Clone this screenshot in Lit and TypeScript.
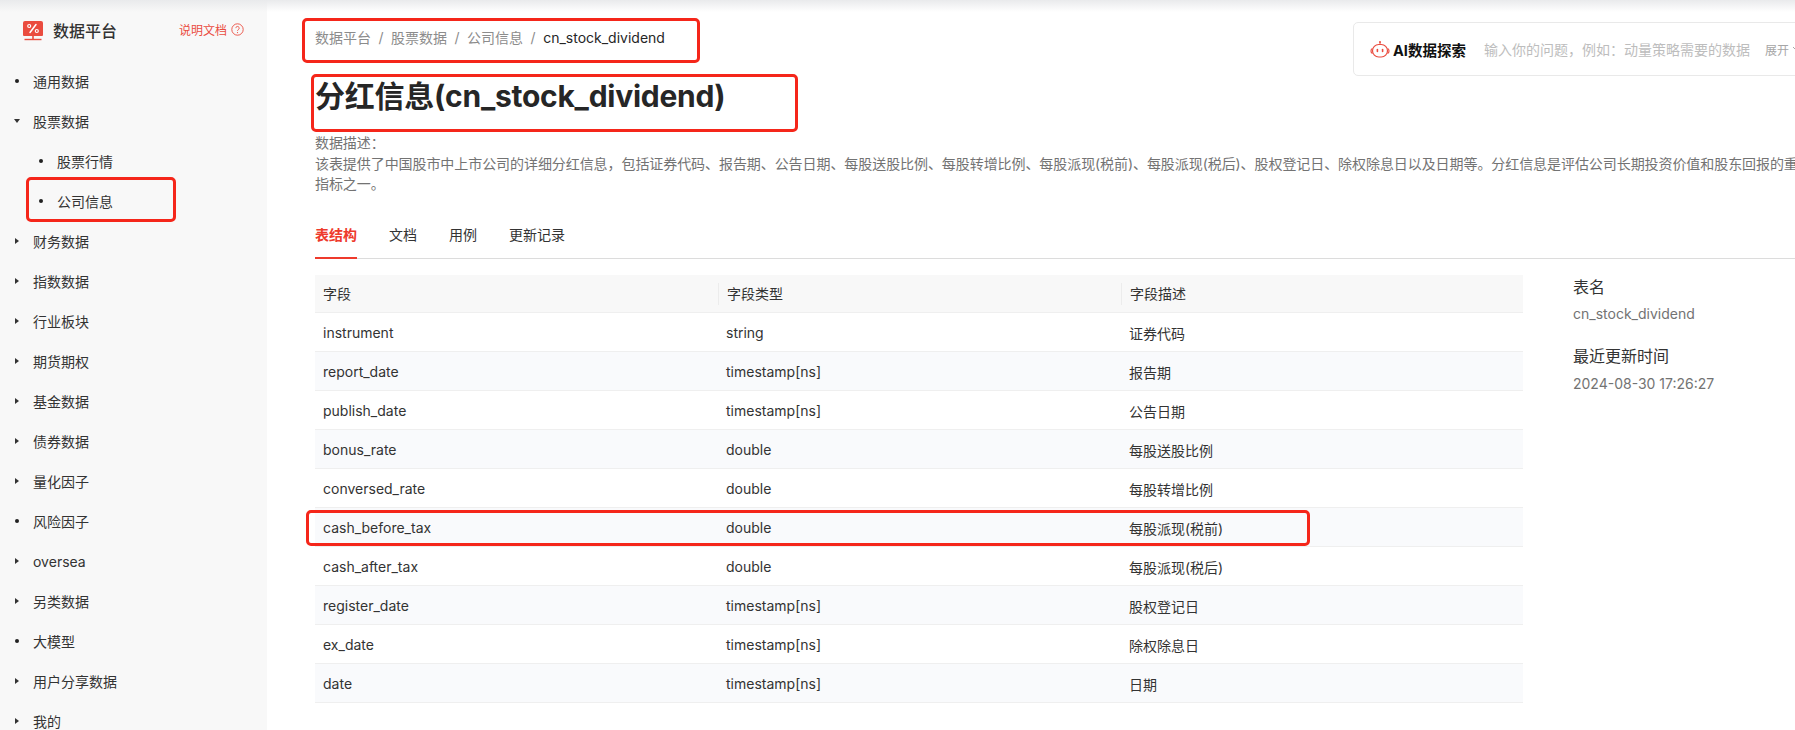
import { LitElement, html, css } from "lit";
import { customElement } from "lit/decorators.js";

type Nav = { label: string; mark: "dot" | "right" | "down"; sub?: boolean; };

const NAV: Nav[] = [
  { label: "通用数据", mark: "dot" },
  { label: "股票数据", mark: "down" },
  { label: "股票行情", mark: "dot", sub: true },
  { label: "公司信息", mark: "dot", sub: true },
  { label: "财务数据", mark: "right" },
  { label: "指数数据", mark: "right" },
  { label: "行业板块", mark: "right" },
  { label: "期货期权", mark: "right" },
  { label: "基金数据", mark: "right" },
  { label: "债券数据", mark: "right" },
  { label: "量化因子", mark: "right" },
  { label: "风险因子", mark: "dot" },
  { label: "oversea", mark: "right" },
  { label: "另类数据", mark: "right" },
  { label: "大模型", mark: "dot" },
  { label: "用户分享数据", mark: "right" },
  { label: "我的", mark: "right" },
];

const ROWS = [
  ["instrument", "string", "证券代码"],
  ["report_date", "timestamp[ns]", "报告期"],
  ["publish_date", "timestamp[ns]", "公告日期"],
  ["bonus_rate", "double", "每股送股比例"],
  ["conversed_rate", "double", "每股转增比例"],
  ["cash_before_tax", "double", "每股派现(税前)"],
  ["cash_after_tax", "double", "每股派现(税后)"],
  ["register_date", "timestamp[ns]", "股权登记日"],
  ["ex_date", "timestamp[ns]", "除权除息日"],
  ["date", "timestamp[ns]", "日期"],
];

const DESC_LABEL = "数据描述\uFF1A";
const DESC =
  "该表提供了中国股市中上市公司的详细分红信息\uFF0C包括证券代码、报告期、公告日期、每股送股比例、每股转增比例、每股派现(税前)、每股派现(税后)、股权登记日、除权除息日以及日期等。分红信息是评估公司长期投资价值和股东回报的重要指标之一。";
const PLACEHOLDER = "输入你的问题\uFF0C例如\uFF1A动量策略需要的数据";

@customElement("app-root")
export class AppRoot extends LitElement {
  static styles = css`
    :host {
      display: flex;
      position: relative;
      width: 1795px;
      height: 730px;
      overflow: hidden;
      background: #fff;
      color: #262626;
      font-family: Inter, "Noto Sans CJK SC", sans-serif;
      font-size: 14px;
    }
    .topshade {
      position: absolute;
      inset: 0 0 auto 0;
      height: 12px;
      background: linear-gradient(#e9eaec, rgba(240, 241, 243, 0));
      pointer-events: none;
    }
    .side {
      flex: 0 0 267px;
      background: #f8f8f8;
      overflow: hidden;
    }
    .brand {
      display: flex;
      align-items: center;
      height: 61px;
      padding-left: 23px;
    }
    .brand svg { flex: none; }
    .brand-name {
      margin-left: 10px;
      margin-bottom: 2px;
      font-size: 16px;
      font-weight: 500;
      color: #333;
    }
    .doc {
      display: flex;
      align-items: center;
      gap: 4px;
      margin-left: 62px;
      margin-bottom: 2px;
      font-size: 12px;
      color: #ea4c3f;
    }
    .item {
      display: flex;
      align-items: center;
      height: 40px;
      padding-left: 14px;
      color: #333;
    }
    .item.sub { padding-left: 38px; }
    .mark {
      flex: none;
      display: flex;
      align-items: center;
      justify-content: center;
      width: 6px;
      margin-right: 13px;
    }
    .dot { width: 4px; height: 4px; border-radius: 50%; background: #222; }
    .right {
      width: 0; height: 0;
      border-left: 4px solid #333;
      border-top: 3.5px solid transparent;
      border-bottom: 3.5px solid transparent;
    }
    .down {
      width: 0; height: 0;
      border-top: 4px solid #333;
      border-left: 3.5px solid transparent;
      border-right: 3.5px solid transparent;
    }
    .main {
      flex: none;
      width: 1558px;
      box-sizing: border-box;
      padding: 0 0 0 48px;
    }
    .head {
      display: flex;
      justify-content: space-between;
      align-items: flex-start;
      height: 79px;
    }
    .crumbs {
      display: flex;
      align-items: center;
      gap: 7.5px;
      padding-top: 28px;
      line-height: 20px;
      color: #8c8c8c;
    }
    .crumbs .cur { color: #262626; }
    .ai {
      flex: none;
      display: flex;
      align-items: center;
      box-sizing: border-box;
      width: 480px;
      height: 54px;
      margin-top: 22px;
      margin-right: -8px;
      padding-left: 16px;
      border: 1px solid #e9e9e9;
      border-radius: 5px;
      background: #fff;
    }
    .ai-title { margin-left: 3px; font-size: 14.5px; font-weight: 700; color: #111; white-space: nowrap; }
    .ai-ph { margin-left: 18px; color: #bdbdbd; white-space: nowrap; }
    .ai-more {
      display: flex;
      align-items: center;
      gap: 3px;
      margin-left: 15px;
      font-size: 12px;
      color: #a6a6a6;
      white-space: nowrap;
    }
    h1 {
      margin: 0;
      font-size: 30px;
      line-height: 34px;
      font-weight: 700;
      letter-spacing: -0.25px;
      color: #262626;
    }
    .desc {
      margin-top: 20px;
      line-height: 20.5px;
      letter-spacing: -0.07px;
      color: #737373;
    }
    .tabs {
      display: flex;
      gap: 32px;
      height: 49px;
      margin-top: 15.5px;
      box-sizing: border-box;
      border-bottom: 1px solid #dcdcdc;
    }
    .tab {
      box-sizing: border-box;
      height: 49px;
      line-height: 50px;
      color: #333;
    }
    .tab.on {
      color: #ee3a2c;
      font-weight: 700;
      border-bottom: 2px solid #ee3a2c;
    }
    .body { display: flex; margin-top: 16px; }
    .table { flex: 0 0 1208px; }
    .row {
      display: grid;
      grid-template-columns: 403px 403px 402px;
      height: 39px;
      box-sizing: border-box;
      border-bottom: 1px solid #efefef;
      align-items: center;
      color: #333;
    }
    .row:nth-child(odd):not(.hd) { background: #f9fafc; }
    .row > div { padding: 1px 0 0 8px; }
    .row.hd { height: 38px; background: #f8f8f8; }
    .row.hd > div { padding-top: 0; line-height: 22px; }
    .row.hd > div + div { border-left: 1px solid #ececec; }
    .info { margin: -1px 0 0 50px; }
    .info h4 {
      margin: 0;
      font-size: 16px;
      font-weight: 400;
      line-height: 26px;
      color: #333;
    }
    .info p {
      margin: 0 0 18px;
      padding-top: 2.5px;
      line-height: 22px;
      color: #737373;
      white-space: nowrap;
    }
    .info p:last-child { padding-top: 4px; }
    .note {
      position: absolute;
      box-sizing: border-box;
      border: 3px solid #f5261a;
      border-radius: 5px;
      pointer-events: none;
    }
    .n1 { left: 302px; top: 18px; width: 398px; height: 45px; }
    .n2 { left: 311px; top: 74px; width: 487px; height: 58px; }
    .n3 { left: 26px; top: 177px; width: 150px; height: 45px; }
    .n4 { left: 306px; top: 510px; width: 1004px; height: 36px; }
  `;

  private renderMark(m: Nav["mark"]) {
    return html`<span class="mark"><span class=${m}></span></span>`;
  }

  render() {
    return html`
      <aside class="side">
        <div class="brand">
          <svg width="20" height="21" viewBox="0 0 20 21">
            <path fill="#ea4c3f" d="M2 1h16a2 2 0 0 1 2 2v12a1 1 0 0 1-1 1H1a1 1 0 0 1-1-1V3a2 2 0 0 1 2-2z"/>
            <path stroke="#fff" stroke-width="1.5" fill="none" stroke-linecap="round" d="M13 4.5 7 12.5"/>
            <circle cx="6.2" cy="6" r="1.5" fill="none" stroke="#fff" stroke-width="1.2"/>
            <circle cx="13.8" cy="11" r="1.5" fill="none" stroke="#fff" stroke-width="1.2"/>
            <rect x="9.2" y="16" width="1.6" height="3" fill="#ea4c3f"/>
            <rect x="1.5" y="18.8" width="17" height="1.4" fill="#ea4c3f"/>
          </svg>
          <span class="brand-name">数据平台</span>
          <span class="doc">说明文档
            <svg width="13" height="13" viewBox="0 0 13 13">
              <circle cx="6.5" cy="6.5" r="5.7" fill="none" stroke="#ea4c3f" stroke-width="0.9"/>
              <path d="M4.8 5.1a1.7 1.7 0 1 1 2.6 1.5c-.6.4-.9.7-.9 1.3" fill="none" stroke="#ea4c3f" stroke-width="0.9"/>
              <circle cx="6.5" cy="9.6" r=".6" fill="#ea4c3f"/>
            </svg>
          </span>
        </div>
        <nav>
          ${NAV.map(
            (n) => html`<div class="item ${n.sub ? "sub" : ""}">${this.renderMark(n.mark)}<span>${n.label}</span></div>`
          )}
        </nav>
      </aside>
      <main class="main">
        <div class="head">
          <div class="crumbs">
            <span>数据平台</span><span>/</span>
            <span>股票数据</span><span>/</span>
            <span>公司信息</span><span>/</span>
            <span class="cur">cn_stock_dividend</span>
          </div>
          <div class="ai">
            <svg width="20" height="18" viewBox="0 0 20 18">
              <circle cx="10" cy="2" r="1" fill="#ea4c3f"/>
              <path d="M10 2v2.5" stroke="#ea4c3f" stroke-width="1"/>
              <rect x="2.5" y="4.5" width="15" height="12.5" rx="6.2" fill="none" stroke="#ea4c3f" stroke-width="1.2"/>
              <path d="M2.5 8.5c-2 .5-2 4.5 0 5M17.5 8.5c2 .5 2 4.5 0 5" fill="none" stroke="#ea4c3f" stroke-width="1.2"/>
              <rect x="6.6" y="8.8" width="1.6" height="3.4" rx=".8" fill="#ea4c3f"/>
              <rect x="11.8" y="8.8" width="1.6" height="3.4" rx=".8" fill="#ea4c3f"/>
            </svg>
            <span class="ai-title">AI数据探索</span>
            <span class="ai-ph">${PLACEHOLDER}</span>
            <span class="ai-more">展开
              <svg width="9" height="6" viewBox="0 0 9 6"><path d="M1 1l3.5 3.5L8 1" fill="none" stroke="#a6a6a6" stroke-width="1"/></svg>
            </span>
          </div>
        </div>
        <h1>分红信息(cn_stock_dividend)</h1>
        <div class="desc">${DESC_LABEL}<br />${DESC}</div>
        <div class="tabs">
          <div class="tab on">表结构</div>
          <div class="tab">文档</div>
          <div class="tab">用例</div>
          <div class="tab">更新记录</div>
        </div>
        <div class="body">
          <div class="table">
            <div class="row hd"><div>字段</div><div>字段类型</div><div>字段描述</div></div>
            ${ROWS.map((r) => html`<div class="row"><div>${r[0]}</div><div>${r[1]}</div><div>${r[2]}</div></div>`)}
          </div>
          <div class="info">
            <h4>表名</h4>
            <p>cn_stock_dividend</p>
            <h4>最近更新时间</h4>
            <p>2024-08-30 17:26:27</p>
          </div>
        </div>
      </main>
      <div class="topshade"></div>
      <div class="note n1"></div>
      <div class="note n2"></div>
      <div class="note n3"></div>
      <div class="note n4"></div>
    `;
  }
}
